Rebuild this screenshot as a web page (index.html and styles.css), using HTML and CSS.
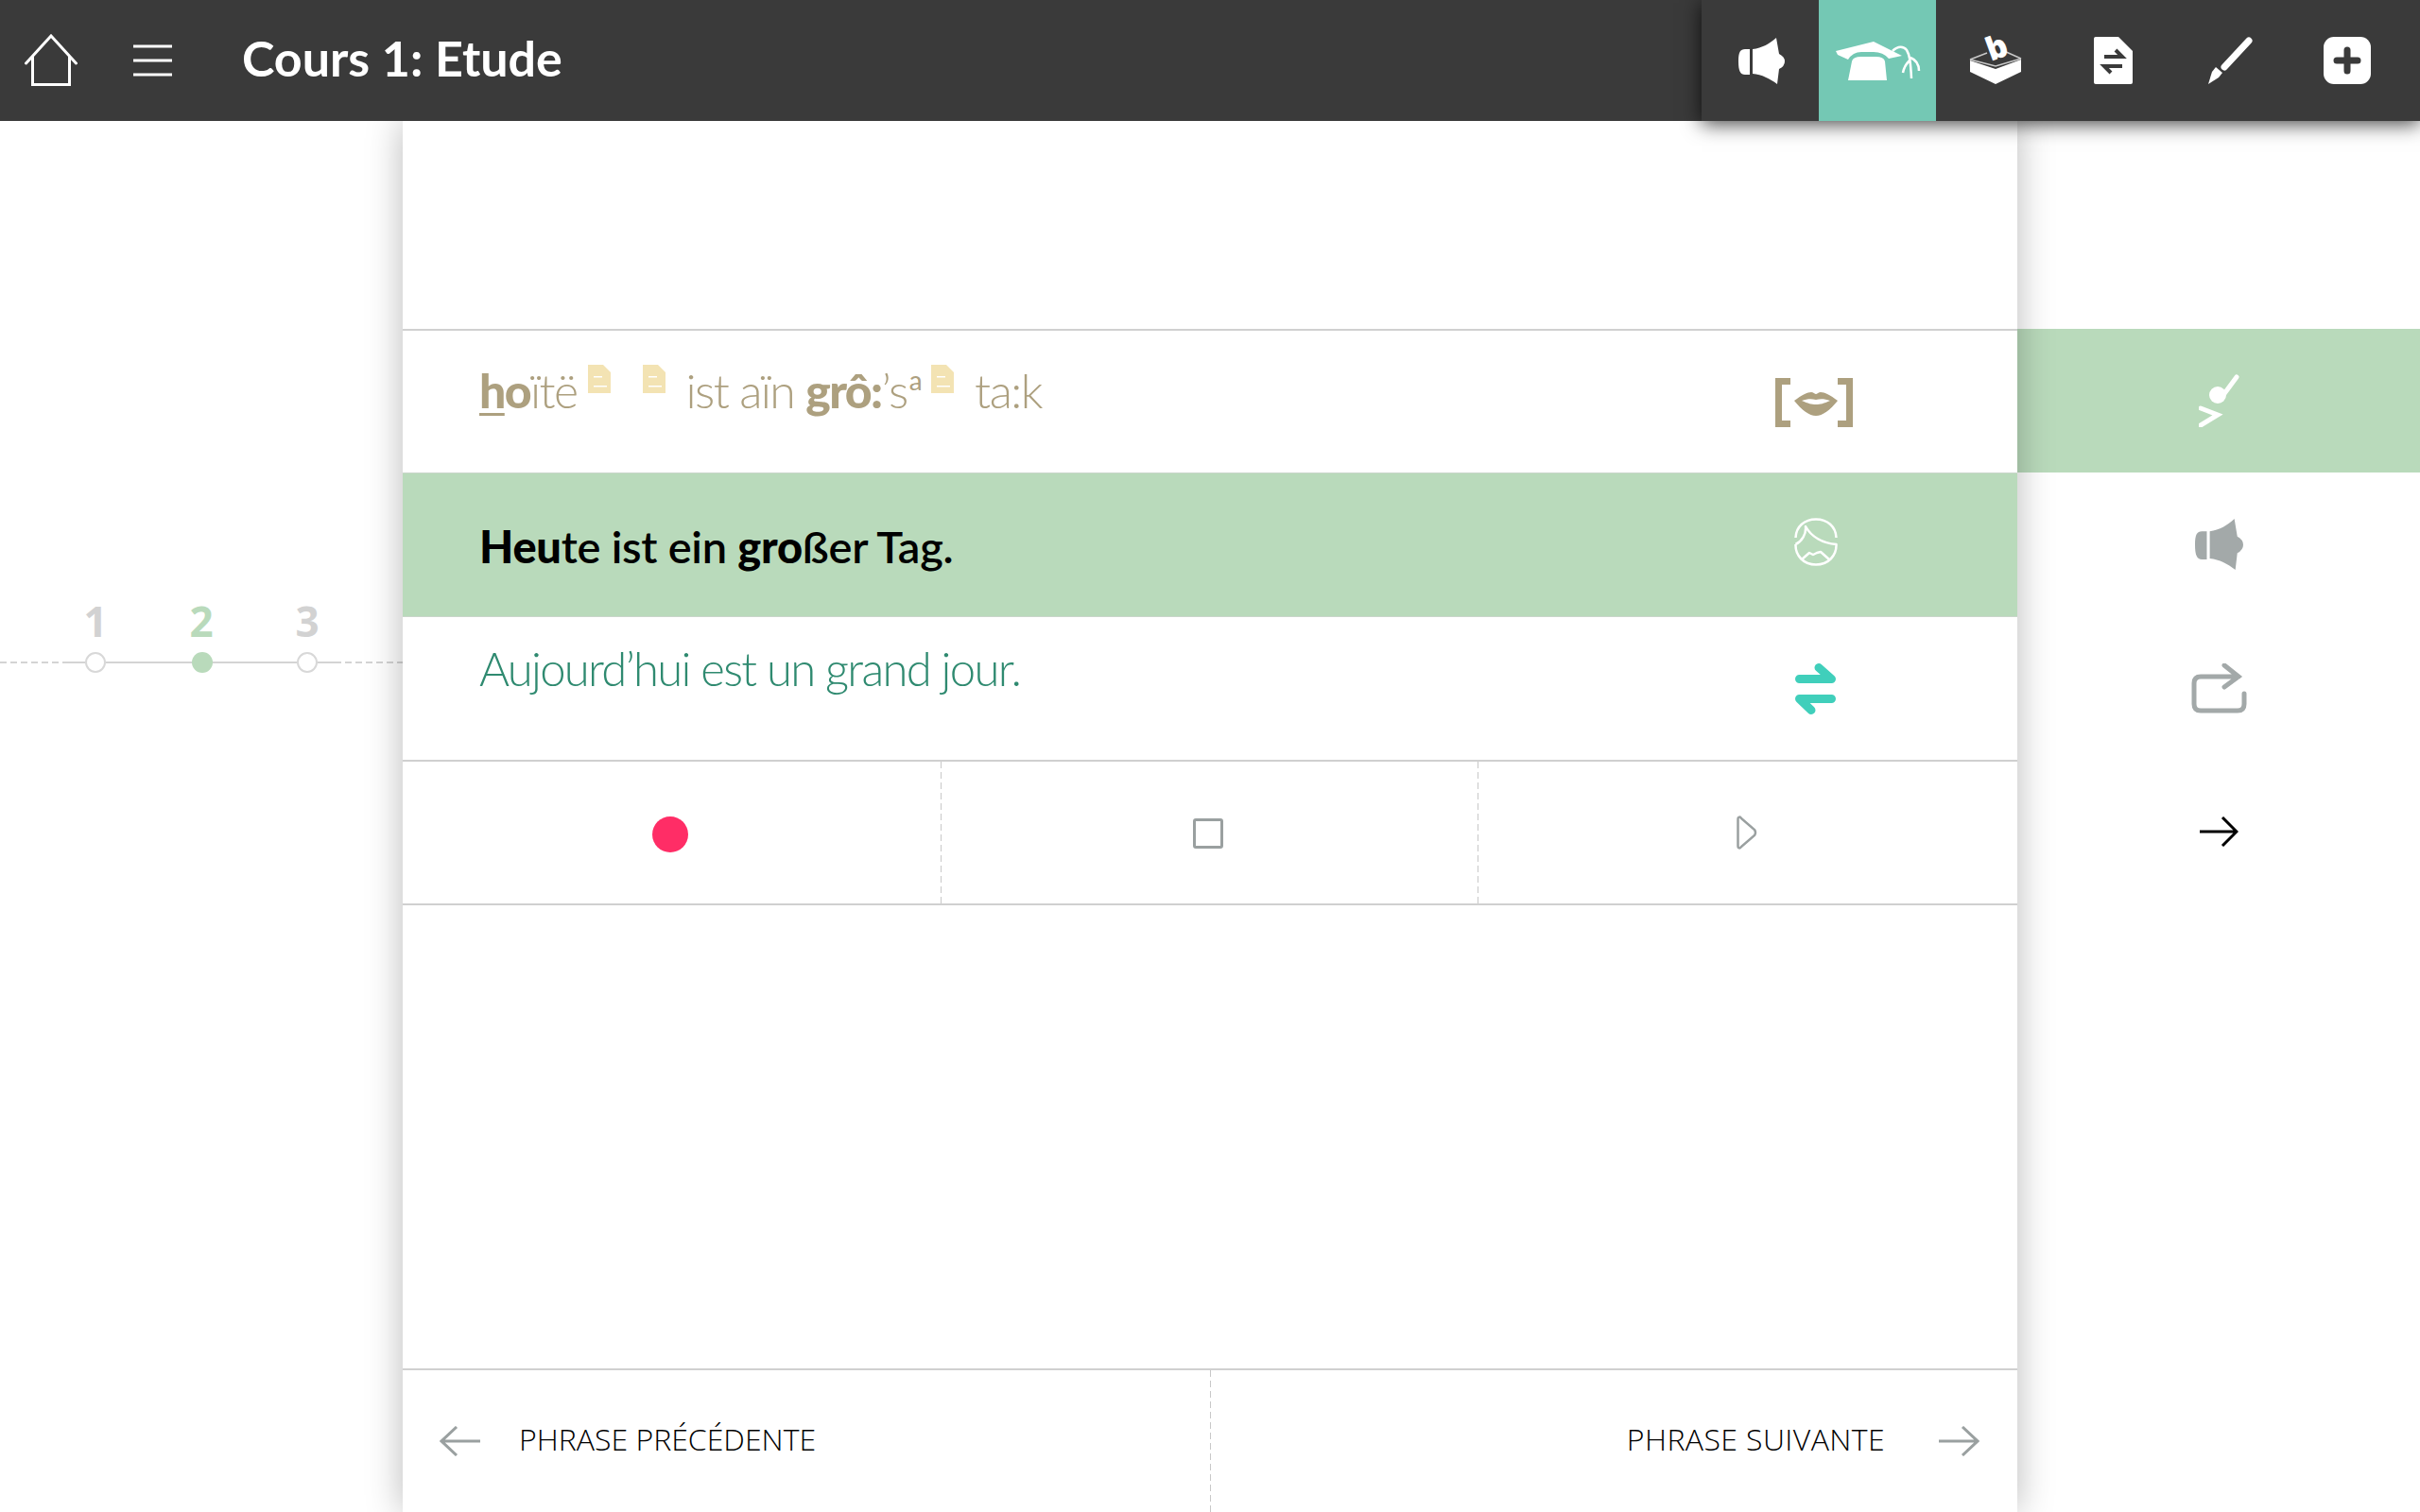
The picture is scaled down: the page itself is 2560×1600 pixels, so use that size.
FILE: index.html
```html
<!DOCTYPE html>
<html lang="fr">

<head>
    <meta charset="UTF-8">
    <title>Cours 1: Etude</title>
    <link rel="stylesheet" href="styles.css">
</head>

<body>
    <!-- Top bar -->
    <header class="topbar">
        <div class="nav">
            <svg class="home" width="56" height="56" viewBox="0 0 56 56"><path d="M1.500 31 L28 2 L54.500 31 M8.500 24 V53.500 H47.500 V24"/></svg>
            <svg class="burger" width="41" height="34" viewBox="0 0 41 34"><path d="M0 2 H41 M0 17 H41 M0 32 H41"/></svg>
            <h1 class="title">Cours 1: Etude</h1>
        </div>
        <div class="toolbar">
            <div class="tool">
                <svg width="49" height="49" viewBox="0 0 49 49"><path d="M12 12 H7 C2 12 0 15 0 25 C0 35 2 39 7 39 H12 Z M15 12 C25 11 33 6 40 0 L43 17 Q49 20 49 25 Q49 30 43 33 L41 49 C33 43 25 39 15 38 Z" fill="#fff"/></svg>
            </div>
            <div class="tool active">
                <svg width="90" height="41" viewBox="0 0 90 41"><path d="M13 41 L17 21 Q18 16 27 16 H42 Q51 16 52 21 L54 41 Z M0 10 L40 0 L70 15 L56 18 Q50 11 40 11 H27 Q18 11 13 19 L2 14 Z" fill="#fff"/><path d="M60 10 C66 4 72 5 75 9 C78 14 79 20 80 39 M78 20 C75 23 72 27 71 33 M79 17 C84 19 88 23 88 31" class="tassel"/></svg>
            </div>
            <div class="tool">
                <svg width="55" height="50" viewBox="0 0 55 50"><path d="M0 24 L18 17 M36 15 L54 23 M0 24 L27 31 L54 23" class="rim"/><text x="0" y="0" class="ballot" transform="translate(22 26) rotate(-20)">b</text><path d="M0 25 L27 34 L54 24 V37 L27 50 L0 37 Z" fill="#fff"/></svg>
            </div>
            <div class="tool">
                <svg width="41" height="50" viewBox="0 0 41 50"><path d="M0 2 Q0 0 2 0 H26 L41 15 V48 Q41 50 39 50 H2 Q0 50 0 48 Z" fill="#fff"/><path d="M11 21 H30 L23 14 M30 31 H11 L18 38" class="swap-dark"/></svg>
            </div>
            <div class="tool">
                <svg width="47" height="50" viewBox="0 0 47 50"><path d="M43 4 L17 32" class="pen"/><path d="M0 50 L4 37 L8 32 L15 38 L11 43 Z" fill="#fff"/></svg>
            </div>
            <div class="tool">
                <svg width="50" height="50" viewBox="0 0 50 50"><rect width="50" height="50" rx="11" fill="#fff"/><path d="M25 14 V36 M14 25 H36" class="plus-dark"/></svg>
            </div>
        </div>
    </header>

    <main class="page">
        <!-- Steps -->
        <aside class="steps">
            <div class="step-nums">
                <span class="num">1</span>
                <span class="num on">2</span>
                <span class="num">3</span>
            </div>
            <div class="track">
                <span class="dash first"></span>
                <span class="line tip"></span>
                <span class="dot"></span>
                <span class="line"></span>
                <span class="dot on"></span>
                <span class="line short"></span>
                <span class="dot"></span>
                <span class="line tip"></span>
                <span class="dash"></span>
            </div>
        </aside>

        <!-- Sentence panel -->
        <section class="panel">
            <div class="row phon">
                <p class="phon-text"><b><u>h</u>o</b>ïtë<svg class="doc" width="24" height="30" viewBox="0 0 24 30"><path d="M0 0 H16 L24 8 V30 H0 Z M6 12 H15 V13.500 H6 Z M6 22 H20 V23.500 H6 Z" fill-rule="evenodd"/></svg><svg class="doc gap" width="24" height="30" viewBox="0 0 24 30"><path d="M0 0 H16 L24 8 V30 H0 Z M6 12 H15 V13.500 H6 Z M6 22 H20 V23.500 H6 Z" fill-rule="evenodd"/></svg><span class="word">ist aïn </span><b>grô:</b>’s<sup>a</sup><svg class="doc" width="24" height="30" viewBox="0 0 24 30"><path d="M0 0 H16 L24 8 V30 H0 Z M6 12 H15 V13.500 H6 Z M6 22 H20 V23.500 H6 Z" fill-rule="evenodd"/></svg><span class="word">ta:k</span></p>
                <div class="row-icon">
                    <svg width="82" height="52" viewBox="0 0 82 52"><path d="M16 3.500 H3.500 V48.500 H16 M66 3.500 H78.500 V48.500 H66" class="bracket"/><path d="M20 24 C28 18 34 15 38 15 C40 15 42 17 43 17 C44 17 46 15 48 15 C52 15 58 18 66 24 C58 34 50 40 43 40 C36 40 28 34 20 24 Z M28 24 C35 27 38 28 43 28 C48 28 51 27 58 24 C52 22 48 22 43 23 C38 22 34 22 28 24 Z" fill="#ada07f" fill-rule="evenodd"/></svg>
                </div>
            </div>
            <div class="row sentence">
                <p class="sentence-text"><b>Heu</b>te ist ein <b>gro</b>ßer Tag.</p>
                <div class="row-icon">
                    <svg width="46" height="51" viewBox="0 0 46 51"><path d="M1.500 21 C2 9 11 1.500 23 1.500 C35 1.500 44 9 44.500 21 M1.500 28 C1 40 10 49.500 23 49.500 C36 49.500 45 40 44.500 28 C30 27 18 20 12 9 C13 17 8 25 1.500 28 M8 44 L16 37 L20 39 L24 37 L28 36 L37 44" class="face"/></svg>
                </div>
            </div>
            <div class="row trans">
                <p class="trans-text">Aujourd’hui est un grand jour.</p>
                <div class="row-icon">
                    <svg width="43" height="54" viewBox="0 0 43 54"><path d="M4.500 16.500 H38.500 L25 4.500 M38.500 37.500 H4.500 L17 49.500" class="swap"/></svg>
                </div>
            </div>
            <div class="controls">
                <div class="ctl"><span class="rec"></span></div>
                <div class="ctl"><span class="stop"></span></div>
                <div class="ctl">
                    <svg width="22" height="36" viewBox="0 0 22 36"><path d="M1.500 4 C1.500 1 4 1 5 3 L19 15 Q21 18 19 21 L5 33 C4 35 1.500 35 1.500 32 Z" class="play"/></svg>
                </div>
            </div>
            <div class="blank"></div>
            <div class="pager">
                <div class="pager-btn">
                    <svg width="43" height="32" viewBox="0 0 43 32"><path d="M43 16 H2 M18 1 L2 16 L18 31" class="pager-arrow"/></svg>
                    <span>PHRASE PRÉCÉDENTE</span>
                </div>
                <div class="pager-btn next">
                    <span>PHRASE SUIVANTE</span>
                    <svg width="43" height="32" viewBox="0 0 43 32"><path d="M0 16 H41 M25 1 L41 16 L25 31" class="pager-arrow"/></svg>
                </div>
            </div>
        </section>

        <!-- Side actions -->
        <aside class="actions">
            <div class="action on">
                <svg width="43" height="56" viewBox="0 0 43 56"><circle cx="20" cy="22" r="9" fill="#fff"/><path d="M23 26 L40 3" class="note"/><path d="M2 36 L20 43 L2 54" class="note"/></svg>
            </div>
            <div class="action">
                <svg width="51" height="54" viewBox="0 0 49 49" preserveAspectRatio="none"><path d="M12 12 H7 C2 12 0 15 0 25 C0 35 2 39 7 39 H12 Z M15 12 C25 11 33 6 40 0 L43 17 Q49 20 49 25 Q49 30 43 33 L41 49 C33 43 25 39 15 38 Z" fill="#a3a9a9"/></svg>
            </div>
            <div class="action">
                <svg width="59" height="53" viewBox="0 0 59 53"><path d="M50 14 H10 Q3 14 3 21 V43 Q3 50 10 50 H49 Q56 50 56 43 V32 M35 2 L50 14 L35 25" class="repeat"/></svg>
            </div>
            <div class="action">
                <svg width="41" height="32" viewBox="0 0 41 32"><path d="M0 16 H39 M24 1 L39 16 L24 31" class="go"/></svg>
            </div>
        </aside>
    </main>
</body>

</html>
```

FILE: styles.css
```css
body {
    margin: 0;
    width: 2560px;
    height: 1600px;
    overflow: hidden;
    background: white;
    font-family: Lato, sans-serif;
}

p,
h1 {
    margin: 0;
}

svg {
    display: block;
    flex: none;
    fill: none;
}

/* Top bar */
.topbar {
    position: relative;
    z-index: 2;
    display: flex;
    justify-content: space-between;
    height: 128px;
    background: #3a3a3a;
}

.nav {
    display: flex;
    align-items: center;
    padding-left: 26px;
}

.home path,
.burger path {
    stroke: #fff;
    stroke-width: 3px;
    stroke-linecap: round;
    fill: none;
}

.burger {
    margin-left: 59px;
}

.title {
    margin-left: 74px;
    margin-bottom: 6px;
    color: white;
    font-size: 52px;
    font-weight: 700;
}

.toolbar {
    display: flex;
    padding-right: 16px;
    background: #3a3a3a;
    box-shadow: 0 3px 20px rgba(0, 0, 0, 0.75);
}

.tool {
    display: flex;
    align-items: center;
    justify-content: center;
    width: 124px;
}

.tool svg {
    margin-left: 2px;
    overflow: visible;
}

.tool.active {
    background: #74c8b4;
}

.tassel {
    stroke: #fff;
    stroke-width: 2.5px;
}

.ballot {
    fill: #fff;
    font-family: "Open Sans", sans-serif;
    font-size: 34px;
    font-weight: 800;
}

.rim {
    stroke: #c9c9c9;
    stroke-width: 1.5px;
}

.swap-dark {
    stroke: #3a3a3a;
    stroke-width: 4px;
}

.pen {
    stroke: #fff;
    stroke-width: 7px;
    stroke-linecap: round;
}

.plus-dark {
    stroke: #3a3a3a;
    stroke-width: 7px;
    stroke-linecap: round;
}

/* Page columns */
.page {
    display: grid;
    grid-template-columns: 426px 1708px 426px;
    height: 1472px;
}

/* Steps */
.steps {
    padding-top: 505px;
}

.step-nums {
    display: flex;
    gap: 90px;
    padding-left: 90px;
}

.num {
    width: 22px;
    display: flex;
    justify-content: center;
    color: #d2d2d2;
    font-family: "Open Sans", sans-serif;
    font-size: 44px;
    font-weight: 700;
    line-height: 48px;
}

.num.on {
    color: #b9dabb;
}

.track {
    display: flex;
    align-items: center;
    height: 22px;
    margin-top: 9px;
}

.dash {
    flex: 1;
    height: 2px;
    background: repeating-linear-gradient(90deg, #d4d4d4 0 7px, transparent 7px 11px);
}

.dash.first {
    flex: none;
    width: 72px;
}

.line {
    flex: none;
    width: 91px;
    height: 2px;
    background: #d4d4d4;
}

.line.tip {
    width: 18px;
}

.line.short {
    width: 89px;
}

.dot {
    flex: none;
    box-sizing: border-box;
    width: 22px;
    height: 22px;
    border: 2px solid #d8d8d8;
    border-radius: 50%;
    background: white;
}

.dot.on {
    border: none;
    background: #b9dabb;
}

/* Sentence panel */
.panel {
    position: relative;
    z-index: 1;
    display: flex;
    flex-direction: column;
    padding-top: 220px;
    box-sizing: border-box;
    background: white;
    box-shadow: 0 0 36px rgba(0, 0, 0, 0.28);
}

.row {
    display: flex;
    justify-content: space-between;
    height: 152px;
    padding-left: 81px;
    box-sizing: border-box;
    border-top: 2px solid #d0d0d0;
}

.row-icon {
    display: flex;
    align-items: center;
    justify-content: center;
    width: 120px;
    margin-right: 155px;
}

.phon {
    align-items: flex-start;
}

.phon .row-icon {
    height: 148px;
    margin-top: 2px;
}

.phon-text {
    display: flex;
    align-items: baseline;
    padding-top: 33px;
    color: #ada07f;
    font-size: 50px;
    font-weight: 300;
    letter-spacing: -1.6px;
    line-height: 60px;
    white-space: pre;
}

.phon-text b {
    font-weight: 900;
}

.phon-text u {
    text-decoration-thickness: 3px;
    text-underline-offset: 5px;
}

.phon-text sup {
    font-size: 28px;
    font-weight: 400;
    line-height: 0;
    align-self: flex-start;
    margin-top: 19px;
    margin-left: 2px;
}

.doc {
    align-self: flex-start;
    margin: 3px 0 0 11px;
    fill: #f3e3b3;
}

.doc.gap {
    margin-left: 34px;
}

.word {
    margin-left: 22px;
}

.sentence {
    align-items: center;
    height: 153px;
    border-top: 1px solid #c9d6ca;
    border-bottom: 1px solid #c9d6ca;
    background: #b9dabb;
}

.sentence-text {
    color: black;
    font-size: 47px;
    font-weight: 600;
    letter-spacing: -0.25px;
    padding-top: 3px;
}

.sentence-text b {
    font-weight: 900;
}

.sentence .row-icon {
    margin-top: -6px;
    margin-right: 153px;
}

.face {
    stroke: #fff;
    stroke-width: 2.5px;
    stroke-linejoin: round;
}

.trans {
    align-items: flex-start;
    height: 151px;
    border-top: none;
}

.trans .row-icon {
    height: 151px;
    margin-right: 154px;
}

.trans-text {
    padding-top: 25px;
    color: #2f8a70;
    font-size: 49px;
    font-weight: 300;
    letter-spacing: -1.7px;
    line-height: 58px;
}

.swap {
    stroke: #40cfbb;
    stroke-width: 9px;
    stroke-linecap: round;
    stroke-linejoin: round;
}

.bracket {
    stroke: #ada07f;
    stroke-width: 7px;
}

/* Record controls */
.controls {
    display: flex;
    height: 154px;
    box-sizing: border-box;
    border-top: 2px solid #d0d0d0;
    border-bottom: 2px solid #d0d0d0;
}

.ctl {
    flex: none;
    box-sizing: border-box;
    width: 568px;
    display: flex;
    align-items: center;
    justify-content: center;
    padding-right: 2px;
    background: repeating-linear-gradient(#c8c8c8 0 7px, transparent 7px 11px) left / 1px 100% no-repeat;
}

.ctl:first-child {
    width: 569px;
    padding-right: 3px;
    background: none;
}

.ctl:last-child {
    flex: 1;
}

.rec {
    width: 38px;
    height: 38px;
    margin-top: 4px;
    border-radius: 50%;
    background: #ff2d66;
}

.stop {
    box-sizing: border-box;
    width: 32px;
    height: 32px;
    margin-top: 1px;
    border: 3px solid #9aa0a0;
    border-radius: 3px;
}

.play {
    margin-top: 1px;
    stroke: #9aa0a0;
    stroke-width: 2.5px;
}

.blank {
    flex: 1;
}

/* Previous / next */
.pager {
    display: flex;
    height: 152px;
    box-sizing: border-box;
    border-top: 2px solid #d0d0d0;
}

.pager-btn {
    flex: 1;
    display: flex;
    align-items: center;
    gap: 41px;
    padding: 0 40px 6px 39px;
    color: black;
    font-family: "Open Sans", sans-serif;
    font-size: 32px;
    font-weight: 300;
}

.pager-btn svg {
    margin-top: 6px;
}

.pager-btn.next {
    justify-content: flex-end;
    gap: 57px;
    letter-spacing: 0.4px;
    background: repeating-linear-gradient(#c8c8c8 0 7px, transparent 7px 11px) left / 1px 100% no-repeat;
}

.pager-arrow {
    stroke: #9aa0a0;
    stroke-width: 3px;
}

/* Side actions */
.actions {
    padding-top: 220px;
}

.action {
    display: flex;
    align-items: center;
    justify-content: center;
    height: 152px;
}

.action.on {
    background: #b9dabb;
}

.note {
    stroke: #fff;
    stroke-width: 5px;
    stroke-linecap: round;
    stroke-linejoin: miter;
}

.repeat {
    stroke: #a3a9a9;
    stroke-width: 5px;
    stroke-linecap: round;
}

.go {
    stroke: black;
    stroke-width: 3px;
}
```
